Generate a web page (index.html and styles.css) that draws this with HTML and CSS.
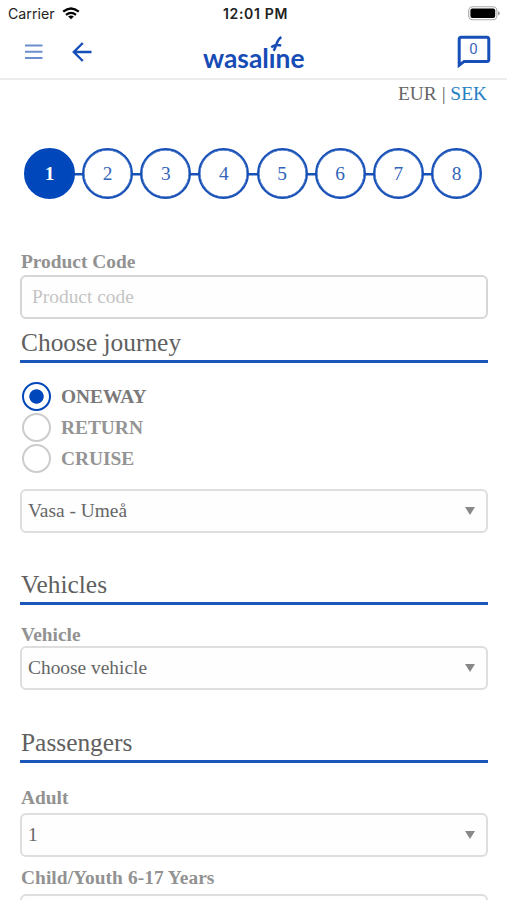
FILE: index.html
```html
<!DOCTYPE html>
<html lang="en">
<head>
<meta charset="utf-8">
<title>Wasaline booking</title>
<link rel="stylesheet" href="styles.css">
</head>
<body>
<header class="header">
  <div class="status">
    <div class="carrier">
      <span>Carrier</span>
      <svg width="18" height="13" viewBox="0 0 18 13" fill="none" stroke="#000" stroke-width="2.3">
        <path d="M1.2 4.7Q9-1.7 16.8 4.7M4 7.9Q9 3.9 14 7.9"/>
        <path d="M9 12.2 6.1 9.6Q9 7.5 11.9 9.6Z" fill="#000" stroke="none"/>
      </svg>
    </div>
    <span class="clock">12:01 PM</span>
    <svg class="battery" width="33" height="15" viewBox="0 0 33 15">
      <rect x=".7" y=".7" width="28.2" height="13" rx="4" fill="#fff" stroke="#aaa" stroke-width="1.1"/>
      <rect x="2.4" y="2.4" width="24.8" height="9.6" rx="2" fill="#000"/>
      <path d="M30.2 5v4.5q1.5-.6 1.5-2.2T30.2 5" fill="#888"/>
    </svg>
  </div>
  <nav class="toolbar">
    <div class="nav-left">
      <svg width="18" height="18" viewBox="0 0 18 18" stroke="#6d8dce" stroke-width="2"><path d="M0 2.5h17.5M0 8.7h17.5M0 14.9h17.5"/></svg>
      <svg width="20" height="20" viewBox="0 0 20 20" fill="none" stroke="#174fb8" stroke-width="2.4"><path d="M19.5 10H2M10.8 1 1.8 10l9 9"/></svg>
    </div>
    <svg class="logo" width="108" height="44" viewBox="-2 0 108 44">
      <text x="1" y="33" textLength="101.5" lengthAdjust="spacingAndGlyphs">wasalıne</text>
      <path d="M71.6 15.8C75 11 74 5.2 79.4 2.2M69.2 12.2Q74 8.8 79.2 10.6" fill="none" stroke="#174bb5" stroke-width="2.5"/>
    </svg>
    <svg class="cart" width="34" height="34" viewBox="0 0 34 34">
      <path d="M2.2 29.5V4.2Q2.2 2.2 4.2 2.2h25.6q2 0 2 2v20.2q0 2-2 2H7.2L2.2 30.2Z" fill="none" stroke="#174fb8" stroke-width="3"/>
      <text x="16.4" y="19.4" text-anchor="middle">0</text>
    </svg>
  </nav>
</header>
<main class="page">
  <div class="currency">EUR | <a>SEK</a></div>
  <ol class="steps">
    <li class="step current">1</li><li class="step">2</li><li class="step">3</li><li class="step">4</li><li class="step">5</li><li class="step">6</li><li class="step">7</li><li class="step">8</li>
  </ol>
  <label class="label product-label">Product Code</label>
  <div class="field placeholder">Product code</div>
  <h2 class="heading journey">Choose journey</h2>
  <div class="options">
    <div class="option selected"><span class="radio"></span>ONEWAY</div>
    <div class="option"><span class="radio"></span>RETURN</div>
    <div class="option"><span class="radio"></span>CRUISE</div>
  </div>
  <div class="field select"><span>Vasa - Umeå</span><i class="caret"></i></div>
  <h2 class="heading vehicles">Vehicles</h2>
  <label class="label vehicle-label">Vehicle</label>
  <div class="field select"><span>Choose vehicle</span><i class="caret"></i></div>
  <h2 class="heading passengers">Passengers</h2>
  <label class="label adult-label">Adult</label>
  <div class="field select"><span>1</span><i class="caret"></i></div>
  <label class="label child-label">Child/Youth 6-17 Years</label>
  <div class="field"></div>
</main>
</body>
</html>
```
FILE: styles.css
```css
* { box-sizing: border-box; }
body {
  margin: 0;
  height: 900px;
  overflow: hidden;
  background: #fff;
  color: #666;
  font: 19.4px/22px "Liberation Serif", serif;
}
svg { display: block; }
.header { height: 80px; border-bottom: 2px solid #ececec; }
.status {
  display: grid;
  grid-template-columns: 1fr auto 1fr;
  align-items: center;
  height: 27px;
  padding: 0 6px 0 8px;
  font: 14.2px/27px Inter, sans-serif;
  color: #222;
}
.carrier { display: flex; align-items: center; gap: 7px; }
.clock { font-weight: 600; font-size: 14px; letter-spacing: .65px; margin-left: 2px; }
.battery { justify-self: end; }
.toolbar {
  display: grid;
  grid-template-columns: 1fr auto 1fr;
  align-items: start;
  height: 51px;
  padding: 8px 16px 0 25px;
}
.nav-left { display: flex; align-items: center; gap: 29px; padding-top: 7px; }
.logo text { font: 700 26.5px Lato, sans-serif; fill: #174bb5; }
.logo { margin-left: -4px; margin-right: 4px; }
.cart { justify-self: end; }
.cart text { font: 15px Roboto, sans-serif; fill: #3b68c0; }
.page { padding: 0 20px; }
.currency { height: 68px; padding-top: 3px; text-align: right; }
.currency a { color: #2580c3; }
.steps {
  display: flex;
  justify-content: space-between;
  margin: 0 5px 0 4px;
  padding: 0;
  list-style: none;
  background: linear-gradient(#1750b7, #1750b7) 10px 25px / calc(100% - 20px) 2.5px no-repeat;
}
.step {
  width: 51px;
  height: 51px;
  border: 2px solid #1750b7;
  border-radius: 50%;
  box-shadow: inset 0 0 0 .5px #1750b7;
  background: #fff;
  color: #3264b9;
  text-align: center;
  line-height: 47px;
}
.step.current { background: #0047bb; border-color: #0047bb; color: #fff; font-weight: bold; }
.label { display: block; height: 23px; padding-left: 1px; font-weight: bold; color: #929292; }
.product-label { margin-top: 52px; height: 24px; }
.child-label { letter-spacing: .06px; }
.field {
  width: 467.5px;
  height: 44px;
  padding: 0 11px 0 6px;
  border: 2px solid #dedede;
  border-radius: 6px;
  background: #fefefe;
  line-height: 40px;
}
.placeholder { border-color: #d6d6d6; color: #c4c4c4; padding-left: 10px; }
.select { display: flex; align-items: center; justify-content: space-between; }
.caret { border: 5px solid transparent; border-top: 8px solid #888; border-bottom: 0; }
.heading {
  width: 467.5px;
  margin: 0;
  padding-left: 1px;
  border-bottom: 3px solid #1b56bb;
  font: 25.4px/29px "Liberation Serif", serif;
  color: #606060;
}
.journey { height: 35px; margin-top: 9px; }
.options { padding: 18px 0 15px 2px; }
.option { display: flex; align-items: center; gap: 10px; height: 31px; font-weight: bold; color: #949494; }
.radio { width: 29px; height: 29px; border: 2px solid #ccc; border-radius: 50%; }
.selected { color: #7a7a7a; }
.selected .radio {
  border-color: #0047bb;
  background: radial-gradient(circle, #0047bb 6.8px, transparent 7.6px);
}
.vehicles, .passengers { height: 35px; margin-top: 37px; }
.vehicle-label { margin-top: 19px; height: 22px; }
.passengers { margin-top: 38px; }
.adult-label { margin-top: 24px; height: 26px; }
.child-label { margin-top: 10px; height: 27px; }
```
